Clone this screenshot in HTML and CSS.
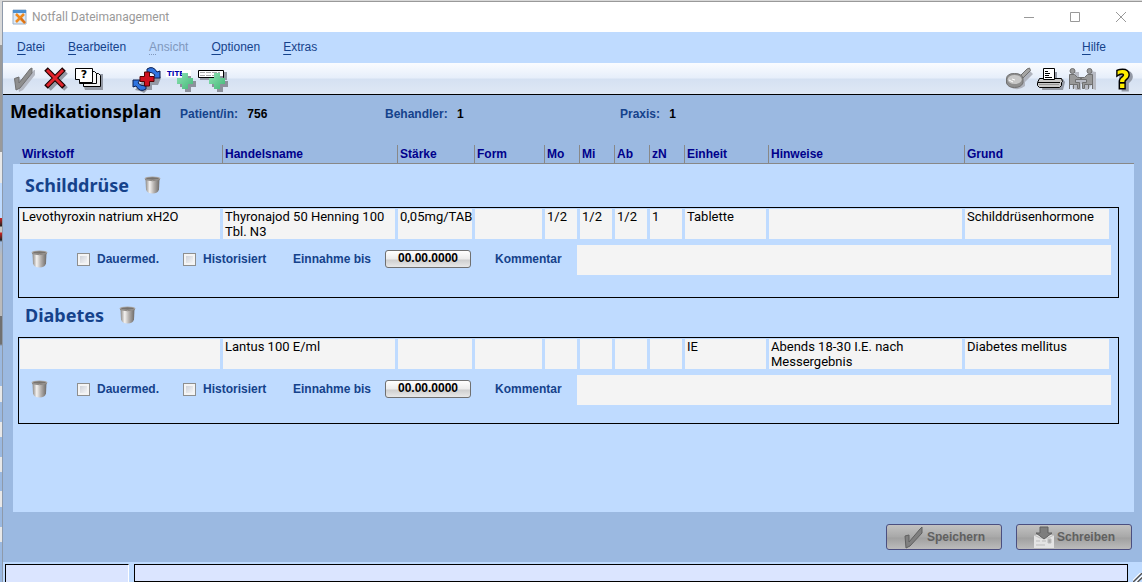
FILE: index.html
```
<!DOCTYPE html>
<html lang="de">
<head>
    <meta charset="UTF-8">
    <meta name="viewport" content="width=device-width, initial-scale=1.0">
    <title>Notfall Dateimanagement</title>
    <link rel="stylesheet" href="styles.css">
</head>
<body>

    <!-- Shared icons -->
    <svg class="symbols" aria-hidden="true">
        <defs>
            <linearGradient id="metal">
                <stop offset="0" stop-color="#8a8784"/>
                <stop offset="0.3" stop-color="#f4f2f0"/>
                <stop offset="0.6" stop-color="#b5b1ae"/>
                <stop offset="1" stop-color="#6d6a68"/>
            </linearGradient>
            <linearGradient id="green" x2="1" y2="1">
                <stop offset="0" stop-color="#8fe3b4"/>
                <stop offset="1" stop-color="#43b877"/>
            </linearGradient>
        </defs>
        <symbol id="trash" viewBox="0 0 17 18">
            <path d="M1.500 2.500 2 13.500q1 4 6.500 4t6.500-4l.5-11z" fill="url(#metal)"/>
            <ellipse cx="8.500" cy="2.500" rx="8" ry="2" fill="#aaa6a2"/>
            <ellipse cx="8.500" cy="2.500" rx="6.500" ry="1.200" fill="#77736f"/>
            <path d="M1 3.500q7.500 2.500 15 0" fill="none" stroke="#8d8985"/>
        </symbol>
        <symbol id="plus" viewBox="0 0 20 20">
            <path d="M8 3h6v5h5v6h-5v5H8v-5H3V8h5z" fill="#8c919c"/>
            <path d="M5 0h6v5h5v6h-5v5H5v-5H0V5h5z" fill="url(#green)"/>
        </symbol>
    </svg>

    <div class="window">
        <header class="titlebar">
            <svg class="app-icon" viewBox="0 0 16 16">
                <path d="M1 1h13v14H1z" fill="#dce9f7" stroke="#9bb0c8"/>
                <path d="M1 1h13v3H1z" fill="#4b8fd0"/>
                <path d="m4 5 9 9M12 5 4 13" stroke="#f08a1d" stroke-width="2.500"/>
                <path d="m9 9 4 5" stroke="#d8701a" stroke-width="2"/>
            </svg>
            <span class="caption">Notfall Dateimanagement</span>
            <div class="window-buttons">
                <button aria-label="Minimieren"><svg viewBox="0 0 12 12"><path d="M1 6.500h10"/></svg></button>
                <button aria-label="Maximieren"><svg viewBox="0 0 12 12"><path d="M1.500 1.500h9v9h-9z"/></svg></button>
                <button aria-label="Schließen"><svg viewBox="0 0 12 12"><path d="m1 1 10 10M11 1 1 11"/></svg></button>
            </div>
        </header>

        <nav class="menubar">
            <a href="#"><u>D</u>atei</a>
            <a href="#"><u>B</u>earbeiten</a>
            <a href="#" class="disabled"><u>A</u>nsicht</a>
            <a href="#"><u>O</u>ptionen</a>
            <a href="#"><u>E</u>xtras</a>
            <a href="#" class="help"><u>H</u>ilfe</a>
        </nav>

        <div class="toolbar">
            <button aria-label="Übernehmen">
                <svg viewBox="0 0 30 30">
                    <path d="m5 16 5-1v5L22 6h1v5L11 26l-4 2z" fill="#b4b8c2"/>
                    <path d="m2.500 14.500 4.500-1.500v6L18 5l2-1v5L8 24l-4 2z" fill="#8e8e8e" stroke="#707070"/>
                </svg>
            </button>
            <button aria-label="Abbrechen">
                <svg viewBox="0 0 30 30">
                    <path d="m5 8 17 17M22 8 5 25" stroke="#9399a5" stroke-width="5"/>
                    <path d="m2 5 18 18M20 5 2 23" stroke="#1a0000" stroke-width="5"/>
                    <path d="m3 6 16 16M19 6 3 22" stroke="#e0242c" stroke-width="3"/>
                </svg>
            </button>
            <button aria-label="Info">
                <svg viewBox="0 0 30 30">
                    <path d="M7 20h16V10h4v16H9z" fill="#9399a5"/>
                    <g fill="#fff" stroke="#000">
                        <path d="M7.500 9.500h15l2 2v11h-17z" fill="#f0f0f0"/>
                        <path d="M3.500 7.500h15l2 2v10h-17z" fill="#f8f8f8"/>
                        <path d="M-.5 4.500h17v14h-13v-3h-4z"/>
                    </g>
                    <text x="8" y="14" class="icon-text page-mark">?</text>
                </svg>
            </button>
            <button aria-label="Aktualisieren" class="group-start">
                <svg viewBox="0 0 30 30">
                    <path d="M15 12h7l5-2 2 4-3 7h-6v5h-5l-3 3-4-2-5-1z" fill="#9399a5"/>
                    <path d="M15 5q6-4 10 3l3-1v7h-7l2-3q-2-3-8-3z" fill="#2f74e0" stroke="#0b1f50"/>
                    <path d="M14 25q-6 4-10-3l-3 1v-7h7l-2 3q2 3 8 3z" fill="#2f74e0" stroke="#0b1f50"/>
                    <path d="M12.500 8h5v4.500H22v5h-4.500V22h-5v-4.500H8v-5h4.500z" fill="#cf1020" stroke="#500"/>
                </svg>
            </button>
            <button aria-label="Titel hinzufügen">
                <svg viewBox="0 0 30 30">
                    <path d="M2 6h25v7H2z" fill="#fff"/>
                    <text x="3" y="12" class="icon-text titel">TITEL</text>
                    <path d="M18 6h9v7h-9z" fill="#fff"/>
                    <use href="#plus" x="13" y="9" width="20" height="20"/>
                </svg>
            </button>
            <button aria-label="Eintrag hinzufügen">
                <svg viewBox="0 0 30 30">
                    <path d="M4 8h27v8H4z" fill="#9399a5"/>
                    <path d="M2.500 6.500h25v7h-25z" fill="#fff" stroke="#000"/>
                    <path d="M4 8.500h20M4 11.500h20" stroke="#aaa" stroke-dasharray="5 1"/>
                    <use href="#plus" x="13" y="9" width="20" height="20"/>
                </svg>
            </button>

            <button aria-label="Suchen" class="right-start">
                <svg viewBox="0 0 30 30">
                    <path d="M6 23q8 5 15-1v-4l8-8-3-3-9 9z" fill="#b0b4be"/>
                    <path d="m16 12 7-7 2.500-1 1 2.500L18 15z" fill="#a4a4a4" stroke="#6e6e6e"/>
                    <path d="M2.500 15q0-5.500 8-5.500t8.500 5.500v4q-2 4.500-8.500 4.500T2.500 19z" fill="#8f8f8f" stroke="#707070"/>
                    <ellipse cx="10.700" cy="15.500" rx="7" ry="4.500" fill="#c8c8c8"/>
                    <path d="m5 16 4 2M8 15l3 1" stroke="#fff"/>
                </svg>
            </button>
            <button aria-label="Drucken">
                <svg viewBox="0 0 30 30">
                    <path d="M8 8h13v7h6l2 3-2 8H6z" fill="#9399a5"/>
                    <path d="m3.500 14.500-2 4v3l2 2h20l2-2v-3l1-1-1-3z" fill="#c9c9c9" stroke="#000"/>
                    <path d="M7.500 15.500v-11h11v11z" fill="#fff" stroke="#000"/>
                    <path d="M9 7.500h3M9 9.500h5M9 11.500h4M9 13.500h7" stroke="#000"/>
                    <path d="M2 18.500h22" stroke="#000"/>
                    <path d="M3 20.500h20" stroke="#999"/>
                </svg>
            </button>
            <button aria-label="Besprechung">
                <svg viewBox="0 0 30 30">
                    <path d="M7 8h4v5l3 3h4l4-4V7l6 1v18l-3-1-1-5-4 6h-3v-6h-4v6H8l-4-4v4H4z" fill="#b8bbc4"/>
                    <g fill="#999" stroke="#707070">
                        <circle cx="4.500" cy="7" r="2.500"/>
                        <circle cx="21.500" cy="7" r="2.500"/>
                        <path d="M1.500 10.500h5l3 3h4v2H7.500v3h4v6h-2v-4h-8zM24.500 10.500h-5l-3 3h-4v2h6v3h-4v6h2v-4h8z"/>
                        <path d="M1.500 20v5M5.500 21v4M24.500 20v5M20.500 21v4" fill="none"/>
                    </g>
                </svg>
            </button>
            <button aria-label="Hilfe" class="help-button">
                <svg viewBox="0 0 30 30">
                    <text x="15" y="24" class="icon-text mark">?</text>
                </svg>
            </button>
        </div>

        <main class="content">
            <div class="info">
                <h1>Medikationsplan</h1>
                <p>Patient/in: <b>756</b></p>
                <p>Behandler: <b>1</b></p>
                <p>Praxis: <b>1</b></p>
            </div>

            <table class="plan">
                <thead>
                    <tr class="columns">
                        <th>Wirkstoff</th>
                        <th>Handelsname</th>
                        <th>Stärke</th>
                        <th>Form</th>
                        <th>Mo</th>
                        <th>Mi</th>
                        <th>Ab</th>
                        <th>zN</th>
                        <th>Einheit</th>
                        <th>Hinweise</th>
                        <th>Grund</th>
                    </tr>
                </thead>

                <!-- Schilddrüse -->
                <tbody class="group">
                    <tr>
                        <th colspan="11">
                            <h2>Schilddrüse</h2>
                            <button class="delete" aria-label="Gruppe löschen"><svg><use href="#trash"/></svg></button>
                        </th>
                    </tr>
                </tbody>
                <tbody class="entry">
                    <tr class="columns values">
                        <td>Levothyroxin natrium xH2O</td>
                        <td>Thyronajod 50 Henning 100 Tbl. N3</td>
                        <td>0,05mg/TAB</td>
                        <td></td>
                        <td>1/2</td>
                        <td>1/2</td>
                        <td>1/2</td>
                        <td>1</td>
                        <td>Tablette</td>
                        <td></td>
                        <td>Schilddrüsenhormone</td>
                    </tr>
                    <tr class="options">
                        <td><button class="delete" aria-label="Eintrag löschen"><svg><use href="#trash"/></svg></button></td>
                        <td><input type="checkbox" id="dauer-1"><label for="dauer-1">Dauermed.</label></td>
                        <td><input type="checkbox" id="hist-1"><label for="hist-1">Historisiert</label></td>
                        <td><label for="bis-1">Einnahme bis</label></td>
                        <td><button class="date" id="bis-1">00.00.0000</button></td>
                        <td><label for="kommentar-1">Kommentar</label></td>
                        <td><textarea id="kommentar-1"></textarea></td>
                    </tr>
                </tbody>

                <!-- Diabetes -->
                <tbody class="group">
                    <tr>
                        <th colspan="11">
                            <h2>Diabetes</h2>
                            <button class="delete" aria-label="Gruppe löschen"><svg><use href="#trash"/></svg></button>
                        </th>
                    </tr>
                </tbody>
                <tbody class="entry">
                    <tr class="columns values">
                        <td></td>
                        <td>Lantus 100 E/ml</td>
                        <td></td>
                        <td></td>
                        <td></td>
                        <td></td>
                        <td></td>
                        <td></td>
                        <td>IE</td>
                        <td>Abends 18-30 I.E. nach Messergebnis</td>
                        <td>Diabetes mellitus</td>
                    </tr>
                    <tr class="options">
                        <td><button class="delete" aria-label="Eintrag löschen"><svg><use href="#trash"/></svg></button></td>
                        <td><input type="checkbox" id="dauer-2"><label for="dauer-2">Dauermed.</label></td>
                        <td><input type="checkbox" id="hist-2"><label for="hist-2">Historisiert</label></td>
                        <td><label for="bis-2">Einnahme bis</label></td>
                        <td><button class="date" id="bis-2">00.00.0000</button></td>
                        <td><label for="kommentar-2">Kommentar</label></td>
                        <td><textarea id="kommentar-2"></textarea></td>
                    </tr>
                </tbody>
            </table>

            <div class="actions">
                <button class="action" disabled>
                    <svg viewBox="0 0 22 23">
                        <path d="m2 10 4-1v7L17 3l2-2v6L7 20l-4 2z" fill="#808080" stroke="#606060"/>
                    </svg>
                    Speichern
                </button>
                <button class="action" disabled>
                    <svg viewBox="0 0 22 23">
                        <path d="M1 9h20v13H1z" fill="#e4e4e4"/>
                        <path d="m1 9 6 3h8l6-3" fill="none" stroke="#bbb"/>
                        <path d="M3 15h4M9 15h4M3 19h9M15 13h3v4h-3z" stroke="#bbb" fill="#aaa"/>
                        <path d="M7 1h8v6h4l-8 6-8-6h4z" fill="#7d7d7d" stroke="#606060"/>
                    </svg>
                    Schreiben
                </button>
            </div>
        </main>

        <footer class="statusbar">
            <div class="status-small"></div>
            <div class="status-wide"></div>
            <svg class="grip" viewBox="0 0 8 8"><path d="M0 8 8 0M4 8l4-4" stroke="#555" stroke-width="1.500"/><path d="M-1.500 8 8-1.500M2.500 8 8 2.500" stroke="#fff"/></svg>
        </footer>
    </div>

</body>
</html>
```
FILE: styles.css
```
* {
    box-sizing: border-box;
}
body {
    margin: 0;
    height: 100vh;
    padding: 1px 0 0 2px;
    /* desktop showing through left of the window */
    background: linear-gradient(to bottom, #d9d9d9 45px, #9a9a9a 45px, #9a9a9a 152px, #e8e8e8 152px, #e8e8e8 183px, #bfdbff 183px, #bfdbff 218px, #c22 218px, #222 226px, #c8c8c8 227px, #c8c8c8 232px, #c22 233px, #222 240px, #9bb9e1 242px, #bbb 256px, #bbb 316px, #707070 316px, #707070 344px, #9bb9e1 346px, #9bb9e1 386px, #e8e8e8 386px, #e8e8e8 402px, #9bb9e1 402px, #9bb9e1 422px, #e8e8e8 422px, #e8e8e8 437px, #9bb9e1 437px, #9bb9e1 457px, #e8e8e8 457px, #e8e8e8 472px, #9bb9e1 472px, #9bb9e1 491px, #e8e8e8 491px, #e8e8e8 507px, #9bb9e1 507px, #9bb9e1 527px, #e8e8e8 527px, #e8e8e8 542px, #9bb9e1 542px);
    font-family: "Liberation Sans", Arial, sans-serif;
    font-size: 12px;
    line-height: 15px;
    color: #000;
}
button {
    font: inherit;
    padding: 0;
    border: none;
    background: none;
}
.symbols {
    position: absolute;
    width: 0;
    height: 0;
}
.window {
    display: flex;
    flex-direction: column;
    height: 100%;
    border-top: 1px solid #999;
    border-left: 1px solid #8e9aab;
    background: #9bb9e1;
}

/* Title bar */
.titlebar {
    display: flex;
    align-items: center;
    height: 30px;
    padding: 0 15px 0 9px;
    background: #fff;
    font-family: Roboto, sans-serif;
    color: #999;
}
.app-icon {
    width: 16px;
    height: 16px;
    margin-right: 4px;
}
.window-buttons {
    display: flex;
    gap: 34px;
    margin-left: auto;
}
.window-buttons svg {
    display: block;
    width: 12px;
    height: 12px;
    fill: none;
    stroke: #999;
}

/* Menu */
.menubar {
    display: flex;
    align-items: center;
    gap: 23px;
    height: 31px;
    padding: 0 36px 0 14px;
    background: #bfdbff;
}
.menubar a {
    color: #15428b;
    text-decoration: none;
}
.menubar u {
    text-decoration-thickness: 1px;
    text-underline-offset: 3px;
}
.menubar .disabled {
    color: #8098bd;
}
.menubar .disabled u {
    text-decoration-style: dotted;
}
.menubar .help {
    margin-left: auto;
}

/* Toolbar */
.toolbar {
    display: flex;
    gap: 2px;
    height: 32px;
    padding: 1px 4px 0 9px;
    border-bottom: 1px solid #000;
    background: linear-gradient(to bottom, #fafcff, #e6eefa 15px, #d5e1f2 16px, #dfe8f5);
}
.toolbar button {
    width: 30px;
    height: 30px;
}
.toolbar svg {
    display: block;
    width: 30px;
    height: 30px;
    overflow: visible;
}
.toolbar .group-start {
    margin-left: 24px;
}
.toolbar .right-start {
    margin-left: auto;
}
.toolbar .help-button {
    margin-left: 8px;
}
.icon-text {
    font-family: "DejaVu Sans", sans-serif;
    font-weight: bold;
    text-anchor: middle;
}
.icon-text.page-mark {
    font-size: 11px;
}
.icon-text.titel {
    font-size: 7px;
    text-anchor: start;
    fill: #0000b0;
}
.icon-text.mark {
    font-size: 24px;
    fill: #ffee00;
    stroke: #000;
    stroke-width: 3px;
    paint-order: stroke;
    filter: drop-shadow(3px 2px 0 #9399a5);
}

/* Patient info */
.content {
    display: flex;
    flex-direction: column;
    flex: 1;
}
.info {
    display: grid;
    grid-template-columns: 170px 205px 235px 1fr;
    height: 50px;
    padding: 5px 0 0 7px;
    color: #15428b;
    font-weight: bold;
}
.info h1 {
    margin: 0;
    font-family: "Open Sans", sans-serif;
    font-size: 18px;
    line-height: 22px;
    color: #000;
}
.info p {
    margin: 0;
    line-height: 28px;
}
.info b {
    margin-left: 6px;
    color: #000;
}

/* Plan */
.plan {
    display: flex;
    flex-direction: column;
    flex: 1;
    margin: 0 8px 0 10px;
    background: #bfdbff;
}
.plan thead,
.plan tbody {
    display: block;
}
.plan td,
.plan th {
    padding: 0;
    text-align: left;
}
.plan thead {
    margin-bottom: 4px;
    padding-left: 7px;
    background: #9bb9e1;
}
.plan .columns {
    display: grid;
    grid-template-columns: 200fr 172fr 74px 67px 32px 32px 32px 32px 81px 193fr 144fr;
    gap: 3px;
}
.plan thead .columns {
    padding-right: 25px;
    border-bottom: 1px solid #888;
}
.plan .columns th {
    padding-left: 2px;
    line-height: 18px;
    color: #00008b;
}
.plan .columns th + th {
    margin-left: -1px;
    border-left: 1px solid #888;
}
.group tr,
.group th {
    display: flex;
    align-items: center;
    gap: 15px;
}
.group th {
    height: 39px;
    padding: 0 0 6px 12px;
}
.group h2 {
    margin: 0;
    font-family: "Noto Sans", sans-serif;
    font-size: 18px;
    line-height: 22px;
    color: #15428b;
}
.delete svg {
    display: block;
    width: 17px;
    height: 18px;
}
.entry {
    margin: 0 15px 0 5px;
    padding: 1px 0 22px 1px;
    border: 1px solid #000;
}
.entry:last-child {
    padding-bottom: 18px;
}
.values {
    padding-right: 9px;
    font-family: Roboto, sans-serif;
    font-size: 13px;
}
.values td {
    min-height: 30px;
    padding-left: 2px;
    background: #f4f4f4;
}
.options {
    display: grid;
    grid-template-columns: 57px 106px 110px 92px 110px 82px 1fr;
    align-items: center;
    margin-top: 6px;
    padding-right: 7px;
    color: #15428b;
    font-weight: bold;
}
.options td {
    display: flex;
    align-items: center;
}
.options td:not(:last-child) {
    padding-bottom: 2px;
}
.options .delete {
    margin-left: 11px;
}
.options input {
    appearance: none;
    width: 13px;
    height: 13px;
    margin: 0 7px 0 0;
    border: 1px solid #8e8f8f;
    background: linear-gradient(135deg, #c4c8d0, #fff);
    box-shadow: inset 0 0 0 2px #f4f4f4;
}
.date {
    width: 86px;
    height: 18px;
    padding-bottom: 2px;
    border: 1px solid #707070;
    border-radius: 3px;
    background: linear-gradient(to bottom, #fff, #ececec 8px, #cfcfcf 9px, #e8e8e8);
    font-weight: bold;
}
.options textarea {
    flex: 1;
    height: 30px;
    padding: 0 2px;
    border: none;
    background: #f4f4f4;
    font: inherit;
    resize: none;
}

/* Bottom buttons */
.actions {
    display: flex;
    justify-content: flex-end;
    gap: 14px;
    padding: 12px 10px 12px 0;
}
.action {
    display: flex;
    align-items: center;
    justify-content: center;
    gap: 2px;
    width: 116px;
    height: 26px;
    border: 1px solid #4b4f80;
    border-radius: 3px;
    background: linear-gradient(to bottom, #c2c2c2, #a8a8a8 12px, #a0a0a0 13px, #bcbcbc);
    color: #606060;
    font-weight: bold;
}
.action svg {
    width: 22px;
    height: 23px;
}

/* Status bar */
.statusbar {
    display: flex;
    gap: 5px;
    height: 20px;
    padding: 2px 0 0 2px;
    background: #bfdbff;
}
.status-small {
    width: 124px;
    border: 1px solid #000;
    border-right-color: #fff;
    border-bottom: none;
    background: #dbe5ff;
}
.status-wide {
    flex: 1;
    border: 1px solid #000;
    background: #dbe5ff;
}
.grip {
    align-self: flex-end;
    width: 9px;
    height: 9px;
}
```
